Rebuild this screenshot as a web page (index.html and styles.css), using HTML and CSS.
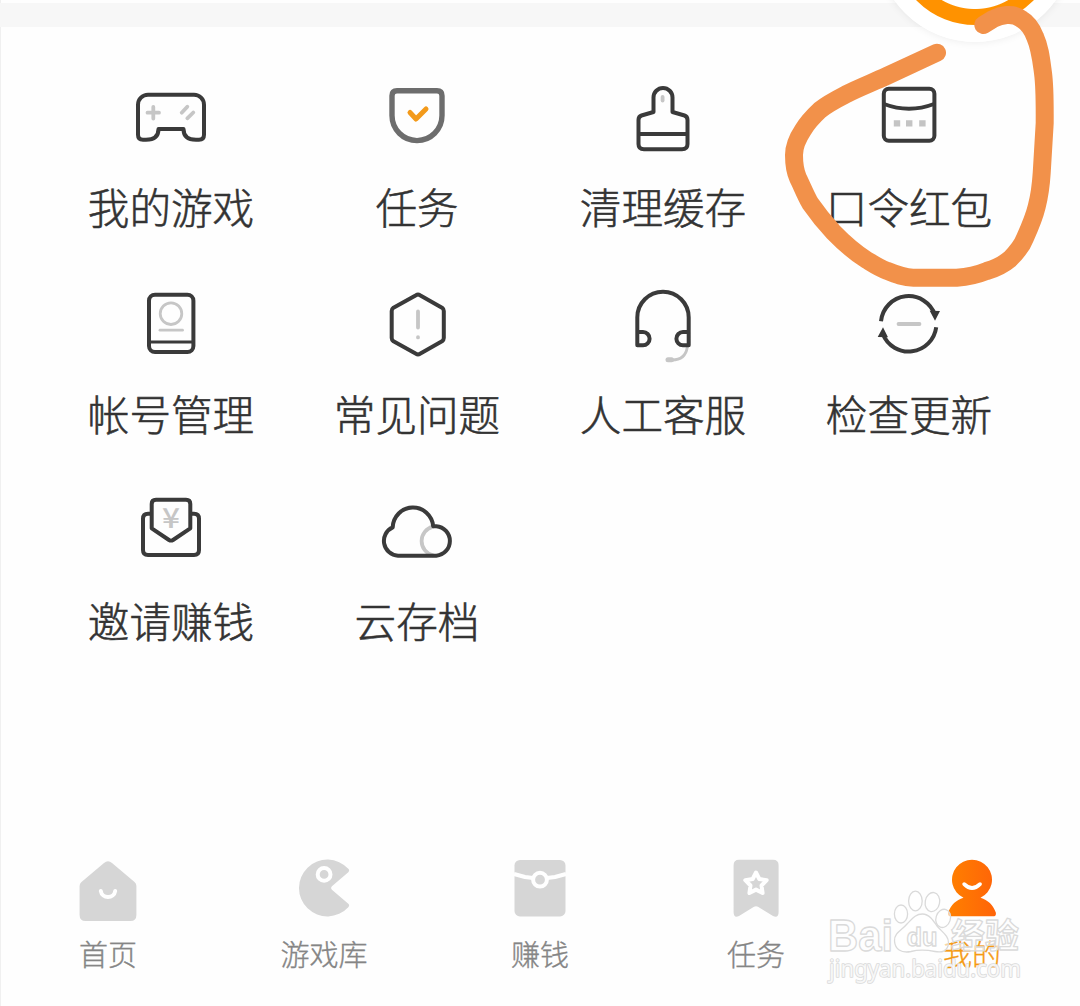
FILE: index.html
```html
<!DOCTYPE html>
<html lang="zh-CN">
<head>
<meta charset="utf-8">
<title>我的</title>
<link rel="stylesheet" href="styles.css">
</head>
<body>
<div class="screen">
  <div class="divider"></div>
  <main class="menu">
    <a class="item">
      <svg class="icon" viewBox="-42 -42 84 84"><path d="M-23-25.3H23A10 10 0 0 1 33-15.3V14.7Q33 19.7 28 19.7H25C17 19.7 12.5 16 12.5 9H-12.5C-12.5 16-17 19.7-25 19.7H-28Q-33 19.7-33 14.7V-15.3A10 10 0 0 1-23-25.3Z"/><path class="soft" d="M-17.7-13V-1.5M-23.5-7.3H-12M10.7-7.3L16.3-13.3M16.3-1.7L22.3-7.5"/></svg>
      <span class="label">我的游戏</span>
    </a>
    <a class="item">
      <svg class="icon" viewBox="-42 -42 84 84"><path class="shield" d="M-20-29.3H20Q25-29.3 25-24.3V-4.4A25 25 0 0 1-25-4.4V-24.3Q-25-29.3-20-29.3Z"/><path class="tick" d="M-7-7.5L-1-1L9-11"/></svg>
      <span class="label">任务</span>
    </a>
    <a class="item">
      <svg class="icon" viewBox="-42 -42 84 84"><path d="M-9.5-8V-22.5A9.5 9.5 0 0 1 9.5-22.5V-8L21.5-4.5Q24.5-3.5 24.5 0V24Q24.5 29.3 19 29.3H-19Q-24.5 29.3-24.5 24V0Q-24.5-3.5-21.5-4.5ZM-24.5 14H24.5"/><path class="soft" d="M-.4-23V-19.5"/></svg>
      <span class="label">清理缓存</span>
    </a>
    <a class="item">
      <svg class="icon" viewBox="-42 -42 84 84"><rect x="-25.2" y="-31.3" width="50.6" height="52" rx="5"/><path d="M-25-16Q0-6.5 25-16"/><path class="dots" d="M-15.2 .2h6.4v6.4h-6.4zM-3 .2h6.4v6.4h-6.4zM10.2 .2h6.4v6.4h-6.4z"/></svg>
      <span class="label">口令红包</span>
    </a>
    <a class="item">
      <svg class="icon" viewBox="-42 -42 84 84"><rect x="-22" y="-32.3" width="44.4" height="57.4" rx="6"/><path class="fine" d="M-22 15H22"/><g class="soft fine"><circle cx="0" cy="-13.3" r="10.8"/><path d="M-11 3.2H11.5"/></g></svg>
      <span class="label">帐号管理</span>
    </a>
    <a class="item">
      <svg class="icon" viewBox="-42 -42 84 84"><path d="M-1-31.8Q1-33 3-31.8L25-19.3Q26.8-18 26.8-16V11Q26.8 13 25 14.3L3 26.8Q1 28 -1 26.8L-23.5 14.3Q-25.3 13-25.3 11V-16Q-25.3-18-23.5-19.3Z"/><path class="soft" d="M1-15.5V.5M1 10.2V10.4"/></svg>
      <span class="label">常见问题</span>
    </a>
    <a class="item">
      <svg class="icon" viewBox="-42 -42 84 84"><path class="soft fine" d="M24.3 20C23 29 18 33 9 33"/><path class="soft mic" d="M5 32.7H8.5"/><path d="M-25.7 18.3V-9.6A25.7 25.7 0 0 1 25.7-9.6V18.3H20A6.6 6.6 0 0 1 20 5.1H25.7M-25.7 5.1H-20A6.6 6.6 0 0 1-20 18.3H-25.7Z"/></svg>
      <span class="label">人工客服</span>
    </a>
    <a class="item">
      <svg class="icon" viewBox="-42 -42 84 84"><path class="arc" d="M-28-5.7A27.8 27.8 0 0 1 26-12M27.2 .3A27.8 27.8 0 0 1-26.2 7"/><path class="solid" d="M20.7-16.3L31-16L26-6.3ZM-31.3 10L-26 .3L-21 10.3Z"/><path class="soft" d="M-10.5-3H10.5"/></svg>
      <span class="label">检查更新</span>
    </a>
    <a class="item">
      <svg class="icon" viewBox="-42 -42 84 84"><path d="M-19-20.3H-23Q-28-20.3-28-15.3V16Q-28 21-23 21H23Q28 21 28 16V-15.3Q28-20.3 23-20.3H19"/><path d="M-15-34.3H15Q19.3-34.3 19.3-30V-5.7L2 6Q0 7.2-2 6L-19.3-5.7V-30Q-19.3-34.3-15-34.3Z"/><text class="yen" x="-9" y="-6" textLength="18" lengthAdjust="spacingAndGlyphs">¥</text></svg>
      <span class="label">邀请赚钱</span>
    </a>
    <a class="item">
      <svg class="icon" viewBox="-42 -42 84 84"><path class="soft" d="M16-7.4A14.8 14.8 0 0 0 16 21.4"/><path d="M-24.3-6.6A20.3 20.6 0 0 1 16.2-7.8H19.3A14.8 14.8 0 0 1 19.3 21.7H-19A14.8 14.8 0 0 1-24.3-6.6Z"/></svg>
      <span class="label">云存档</span>
    </a>
  </main>

  <nav class="tabs">
    <a class="tab">
      <svg class="tab-icon" viewBox="-36 -36 72 72"><path d="M-4-27Q0-30.5 4-27L26.5-8Q28.4-6.5 28.4-4V25Q28.4 31 22.4 31H-22.4Q-28.4 31-28.4 25V-4Q-28.4-6.5-26.5-8Z"/><path class="cut" d="M-7.2 1C-6 9 6 9 7.2 1"/></svg>
      <span>首页</span>
    </a>
    <a class="tab">
      <svg class="tab-icon" viewBox="-36 -36 72 72"><path d="M24.3-17.8L8.2-4Q6-2 8.2 0L24.3 13.8Q26 15.5 24.3 17.2A28.4 28.4 0 1 1 24.3-21.2Q26-19.5 24.3-17.8Z"/><circle class="cut" cx=".1" cy="-15.6" r="6.4"/></svg>
      <span>游戏库</span>
    </a>
    <a class="tab">
      <svg class="tab-icon" viewBox="-36 -36 72 72"><rect x="-25.5" y="-30" width="51" height="56.4" rx="5.5"/><path class="cut flat" d="M-26-16L-15-13Q-11-12.3-7-12M26-16L15-13Q11-12.3 7-12"/><circle class="cut" cx="0" cy="-10.3" r="6.9"/></svg>
      <span>赚钱</span>
    </a>
    <a class="tab">
      <svg class="tab-icon" viewBox="-36 -36 72 72"><path d="M-17-30.2H17Q22.6-30.2 22.6-24.7V22Q22.6 28.5 17 26L2 16.8Q0 15.6-2 16.8L-17 26Q-22.4 28.5-22.4 22V-24.7Q-22.4-30.2-17-30.2Z"/><path class="cut" d="M0-17.5L3.3-11L10.7-9.8L5.5-4.5L6.6 3L0-.4L-6.6 3L-5.5-4.5L-10.7-9.8L-3.3-11Z"/></svg>
      <span>任务</span>
    </a>
    <a class="tab active">
      <svg class="tab-icon" viewBox="-36 -36 72 72">
        <defs><linearGradient id="person" x1="0" y1="0" x2="1" y2="0"><stop offset="0" stop-color="#ff8000"/><stop offset="1" stop-color="#ff6408"/></linearGradient></defs>
        <path fill="url(#person)" d="M-8.5 7.8A20 20 0 1 1 8.5 7.8C16 10 21 15 23.8 22.5Q24.5 26.3 21 26.3H-21Q-24.5 26.3-23.8 22.5C-21 15-16 10-8.5 7.8Z"/><path class="cut smile" d="M-7.8-5.8Q0 2 8-5.8"/></svg>
      <span>我的</span>
    </a>
  </nav>

  <div class="float-button"></div>

  <svg class="overlay" viewBox="0 0 1080 1006">
    <path class="marker" d="M937 52.7L886.7 76C870 83.500 857 88.500 846.7 94C836 99.500 828 103.500 820 110C812 117.500 807 123 803 130C797 139 794 146 794 155C794 164 794.500 170 798 178C802 186 805 194 810 203C817 213 824 222 833 231.7C844 243 854 252 866.7 260C874 264.500 879 268 886.7 270.7C896 274.500 904 277.700 913.3 277.700H956.7C967 277 977 275 986.7 271C997 268 1004 264 1010 259C1017 252 1022 246 1025 238C1030 227 1034 218 1036.7 206.7C1040 194 1041 184 1041.700 173L1044.700 123C1044.700 103 1045 88 1043 73C1041 58 1040 48 1035 36.7C1032 29 1028 23 1021.700 19.3C1017 15.500 1012 14.500 1006.700 15C1001 15.500 997 17 993 19L983.3 25"/>
    <g class="watermark">
      <ellipse cx="901" cy="914" rx="6.6" ry="9"/><ellipse cx="915.4" cy="901" rx="6.8" ry="9.8"/><ellipse cx="932.4" cy="902" rx="7.2" ry="9.6" transform="rotate(10 932 902)"/><ellipse cx="943.3" cy="918.3" rx="7.2" ry="9.3" transform="rotate(18 943 918)"/>
      <path d="M922.5 914C929 914 933 920 937 926C942 932 949 936 948.500 943C948 951 942 953 935 951.500C927 950 919 949.500 911 951.500C901 953.500 895 949 894.500 941C894 933 902 930 907 924C912 919 915 914 922.500 914Z"/>
      <text x="828" y="950.5" class="wm-bai" textLength="65" lengthAdjust="spacingAndGlyphs">Bai</text>
      <text x="906.5" y="946" class="wm-du" textLength="31" lengthAdjust="spacingAndGlyphs">du</text>
      <text x="951" y="948" class="wm-cjk" textLength="68" lengthAdjust="spacingAndGlyphs">经验</text>
      <text x="829" y="976.5" class="wm-url" textLength="192" lengthAdjust="spacingAndGlyphs">jingyan.baidu.com</text>
    </g>
  </svg>
</div>
</body>
</html>
```

FILE: styles.css
```css
* { box-sizing: border-box; }

body {
  margin: 0;
  background: #fefefe;
  font-family: "Noto Sans CJK SC", sans-serif;
  font-weight: 300;
}

.screen {
  position: relative;
  display: flex;
  flex-direction: column;
  width: 1080px;
  height: 1006px;
  padding-top: 3px;
  overflow: hidden;
  box-shadow: inset 1px 0 #f0f0f0;
}

.divider { flex: none; height: 24px; background: #f7f7f7; }

.menu {
  flex: none;
  display: grid;
  grid-template-columns: repeat(4, 246px);
  grid-auto-rows: 207px;
  justify-content: center;
  padding-top: 51px;
}

.item {
  display: flex;
  flex-direction: column;
  align-items: center;
  gap: 19px;
}

.icon {
  flex: none;
  width: 84px;
  height: 84px;
  fill: none;
  stroke: #3a3a3a;
  stroke-width: 4;
  stroke-linejoin: round;
}

.soft { stroke: #c6c6c6; stroke-linecap: round; stroke-width: 3.8; }
.fine { stroke-width: 2.8; }
.mic { stroke-width: 5; }
.shield { stroke: #6d6d6d; stroke-width: 5.4; }
.tick { stroke: #f39a1a; stroke-width: 5; stroke-linecap: round; }
.dots { fill: #c4c4c4; stroke: none; }
.solid { fill: #383838; stroke: none; }
.yen { fill: #c6c6c6; stroke: none; font-size: 28px; font-weight: 500; }

.label {
  font-size: 41.6px;
  line-height: 50px;
  color: #333;
  white-space: nowrap;
  -webkit-text-stroke: .55px #333;
}

.tabs {
  display: grid;
  grid-template-columns: repeat(5, 216px);
  margin-top: auto;
  height: 152px;
}

.tab {
  display: flex;
  flex-direction: column;
  align-items: center;
  gap: 7px;
  font-size: 29px;
  line-height: 40px;
  color: #858585;
  -webkit-text-stroke: .35px currentColor;
}

.tab-icon { flex: none; width: 72px; height: 72px; fill: #d6d6d6; }
.cut { fill: none; stroke: #fff; stroke-width: 4; stroke-linecap: round; stroke-linejoin: round; }
.flat { stroke-linecap: butt; }
.smile { stroke-width: 3.8; }
.active { color: #f59a12; }

.float-button {
  position: absolute;
  left: 876px;
  top: -156px;
  width: 198px;
  height: 198px;
  border: 17.5px solid #fff;
  border-radius: 50%;
  background: radial-gradient(circle, #fff 65.5px, #ff9200 66.5px);
  box-shadow: 0 0 8px rgba(0, 0, 0, .08);
}

.overlay { position: absolute; inset: 0; width: 1080px; height: 1006px; pointer-events: none; }
.marker { fill: none; stroke: #f2914a; stroke-width: 18; stroke-linecap: round; stroke-linejoin: round; }

.watermark { fill: rgba(255, 255, 255, .6); stroke: #dadada; stroke-width: 1.3; stroke-linejoin: round; }
.wm-bai { font: bold 44px "Liberation Sans", sans-serif; }
.wm-du { font: bold 25px "Liberation Sans", sans-serif; }
.wm-cjk { font: bold 34px "Noto Sans CJK SC", sans-serif; }
.wm-url { font: 23px "Noto Sans", sans-serif; stroke-width: 1.6; paint-order: stroke; fill: rgba(255, 255, 255, .75); }
```
